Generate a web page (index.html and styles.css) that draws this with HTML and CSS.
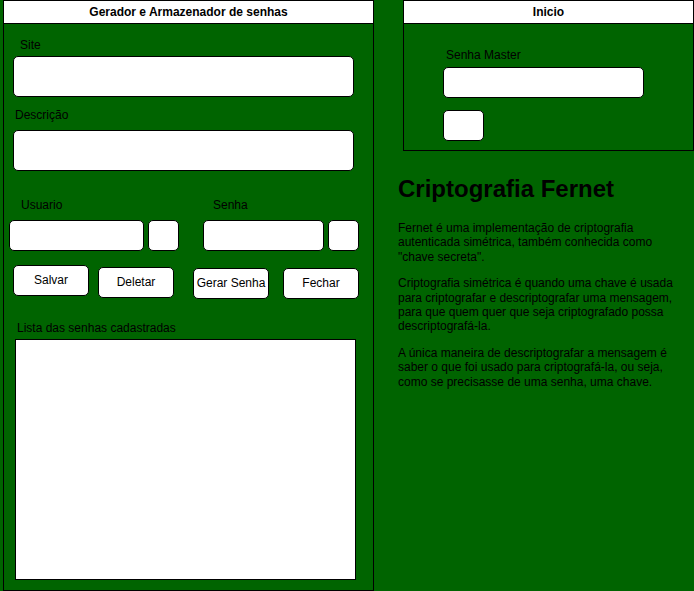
FILE: index.html
```html
<!DOCTYPE html>
<html lang="pt-BR">
<head>
<meta charset="utf-8">
<title>Gerador e Armazenador de senhas</title>
<link rel="stylesheet" href="styles.css">
</head>
<body>
<div class="page">
  <section class="panel panel-main">
    <header class="panel-head">Gerador e Armazenador de senhas</header>
    <div class="panel-body">
      <label class="lbl lbl-site">Site</label>
      <input class="box box-site" type="text">
      <label class="lbl lbl-desc">Descrição</label>
      <input class="box box-desc" type="text">
      <div class="cred-labels">
        <span class="lbl-user">Usuario</span>
        <span class="lbl-pass">Senha</span>
      </div>
      <div class="cred-row">
        <input class="box box-user" type="text">
        <button class="box box-sq" type="button"></button>
        <input class="box box-pass" type="text">
        <button class="box box-sq" type="button"></button>
      </div>
      <div class="actions">
        <button class="btn btn-salvar" type="button">Salvar</button>
        <button class="btn btn-deletar" type="button">Deletar</button>
        <button class="btn btn-gerar" type="button">Gerar Senha</button>
        <button class="btn btn-fechar" type="button">Fechar</button>
      </div>
      <label class="lbl lbl-list">Lista das senhas cadastradas</label>
      <div class="list-box"></div>
    </div>
  </section>
  <div class="side">
    <section class="panel panel-login">
      <header class="panel-head">Inicio</header>
      <div class="panel-body">
        <label class="lbl lbl-master">Senha Master</label>
        <input class="box box-master" type="password">
        <button class="box box-enter" type="button"></button>
      </div>
    </section>
    <article class="about">
      <h2 class="about-title">Criptografia Fernet</h2>
      <p class="about-text">Fernet é uma implementação de criptografia autenticada simétrica, também conhecida como "chave secreta".</p>
      <p class="about-text">Criptografia simétrica é quando uma chave é usada para criptografar e descriptografar uma mensagem, para que quem quer que seja criptografado possa descriptografá-la.</p>
      <p class="about-text">A única maneira de descriptografar a mensagem é saber o que foi usado para criptografá-la, ou seja, como se precisasse de uma senha, uma chave.</p>
    </article>
  </div>
</div>
</body>
</html>
```
FILE: styles.css
```css
html, body {
  margin: 0;
  padding: 0;
}
body {
  background: #006400;
  font-family: "Liberation Sans", Arial, Helvetica, sans-serif;
  font-size: 12px;
  color: #000;
  width: 694px;
  height: 591px;
  overflow: hidden;
}
.page {
  display: flex;
  align-items: flex-start;
  padding-left: 3px;
}
.panel {
  border: 1px solid #000;
  box-sizing: border-box;
}
.panel-main {
  width: 371px;
  height: 591px;
  flex: none;
}
.panel-head {
  height: 23px;
  box-sizing: border-box;
  background: #fff;
  border-bottom: 1px solid #000;
  line-height: 23px;
  text-align: center;
  font-weight: bold;
}
.panel-body {
  display: flex;
  flex-direction: column;
  align-items: flex-start;
}
.lbl {
  display: block;
  line-height: 14px;
}
.box {
  display: block;
  box-sizing: border-box;
  margin: 0;
  padding: 0;
  background: #fff;
  border: 1px solid #000;
  border-radius: 5px;
  font: inherit;
  outline: none;
}
.lbl-site { margin: 14px 0 0 16px; }
.box-site { margin: 4px 0 0 9px; width: 341px; height: 41px; }
.lbl-desc { margin: 11px 0 0 11px; }
.box-desc { margin: 8px 0 0 9px; width: 341px; height: 41px; }

.cred-labels {
  display: flex;
  margin: 27px 0 0 17px;
  line-height: 14px;
}
.lbl-user { width: 192px; }
.cred-row {
  display: flex;
  margin: 8px 0 0 5px;
}
.box-user { width: 135px; height: 31px; }
.box-sq { width: 31px; height: 31px; margin-left: 4px; }
.box-pass { width: 121px; height: 31px; margin-left: 24px; }

.actions {
  display: flex;
  align-items: flex-start;
  margin: 14px 0 0 9px;
}
.btn {
  box-sizing: border-box;
  width: 76px;
  height: 31px;
  margin: 0;
  padding: 0 0 2px;
  background: #fff;
  border: 1px solid #000;
  border-radius: 5px;
  font: inherit;
  color: #000;
  text-align: center;
  white-space: nowrap;
}
.btn-deletar { margin: 2px 0 0 9px; }
.btn-gerar { margin: 3px 0 0 19px; }
.btn-fechar { margin: 3px 0 0 14px; }

.lbl-list { margin: 22px 0 0 13px; }
.list-box {
  margin: 4px 0 0 11px;
  width: 341px;
  height: 241px;
  box-sizing: border-box;
  background: #fff;
  border: 1px solid #000;
}

.side {
  margin-left: 24px;
  width: 296px;
  flex: none;
}
.panel-login {
  margin-left: 5px;
  width: 291px;
  height: 151px;
}
.lbl-master { margin: 24px 0 0 42px; }
.box-master { margin: 5px 0 0 39px; width: 201px; height: 31px; }
.box-enter { margin: 12px 0 0 39px; width: 41px; height: 31px; }

.about {
  width: 292px;
}
.about-title {
  margin: 24px 0 18px;
  font-size: 24px;
  line-height: 28px;
  font-weight: bold;
}
.about-text {
  margin: 0 0 12px;
  line-height: 14.4px;
}
```
